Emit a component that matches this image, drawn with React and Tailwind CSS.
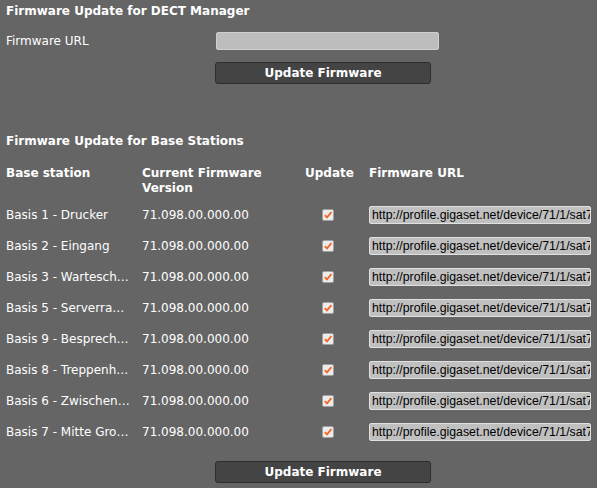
import React from "react";

const rows = [
  "Basis 1 - Drucker",
  "Basis 2 - Eingang",
  "Basis 3 - Wartesch…",
  "Basis 5 - Serverra…",
  "Basis 9 - Besprech…",
  "Basis 8 - Treppenh…",
  "Basis 6 - Zwischen…",
  "Basis 7 - Mitte Gro…",
];

function Check() {
  return (
    <span className="flex h-[12px] w-[12px] items-center justify-center rounded-[2px] border border-[#a0a0a0] bg-[#ececec]">
      <svg width="10" height="10" viewBox="0 0 10 10">
        <path d="M1.8 5.2 L4 7.4 L8.4 2.2" fill="none" stroke="#f26522" strokeWidth="1.8" />
      </svg>
    </span>
  );
}

function Button() {
  return (
    <button className="h-[22px] w-[216px] rounded-[3px] border border-[#2e2e2e] bg-[#444444] text-[12px] font-bold text-white">
      Update Firmware
    </button>
  );
}

export default function App() {
  return (
    <div
      className="min-h-[488px] w-[597px] bg-[#656565] text-[12px] text-white"
      style={{ fontFamily: '"DejaVu Sans", Tahoma, sans-serif' }}
    >
      <div className="px-[6px] pt-[4px] font-bold leading-[15px]">Firmware Update for DECT Manager</div>
      <div className="mt-[13px] flex items-center">
        <div className="w-[216px] pl-[6px]">Firmware URL</div>
        <div className="h-[18px] w-[223px] rounded-[2px] border border-[#d0d0d0] bg-[#bdbdbd]" />
      </div>
      <div className="mt-[12px] pl-[215px]">
        <Button />
      </div>

      <div className="mt-[50px] px-[6px] font-bold leading-[15px]">Firmware Update for Base Stations</div>

      <div className="mt-[17px] grid grid-cols-[142px_163px_64px_1fr] font-bold leading-[15px]">
        <div className="pl-[6px]">Base station</div>
        <div>
          Current Firmware
          <br />
          Version
        </div>
        <div>Update</div>
        <div>Firmware URL</div>
      </div>

      <div className="mt-[3px] flex flex-col">
        {rows.map((r) => (
          <div key={r} className="grid h-[31px] grid-cols-[142px_163px_64px_1fr] items-center">
            <div className="pl-[6px] whitespace-nowrap">{r}</div>
            <div>71.098.00.000.00</div>
            <div className="flex pl-[17px]">
              <Check />
            </div>
            <div className="flex">
              <div
                className="h-[18px] w-[222px] overflow-hidden whitespace-nowrap rounded-[2px] border border-[#e0e0e0] bg-[#c0c0c0] pl-[2px] text-[12.3px] leading-[16px] text-black"
                style={{ fontFamily: '"Liberation Sans", Arial, sans-serif' }}
              >
                http://profile.gigaset.net/device/71/1/sat7
              </div>
            </div>
          </div>
        ))}
      </div>

      <div className="mt-[14px] pl-[215px] pb-[6px]">
        <Button />
      </div>
    </div>
  );
}
